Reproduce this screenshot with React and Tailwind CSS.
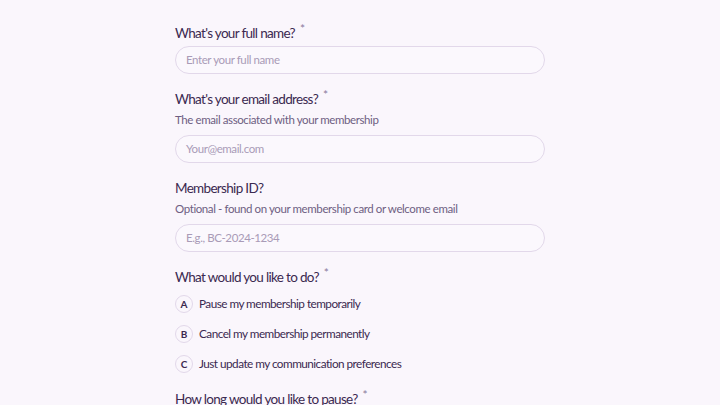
import React from "react";

function Label({ children, required }) {
  return (
    <div className="flex items-start text-[13.5px] leading-[20px] tracking-[-0.05em] text-[#3b2950]">
      <span>{children}</span>
      {required && <span className="ml-[5px] -mt-[4px] text-[12px] text-[#8a7a9c]">*</span>}
    </div>
  );
}

function Desc({ children }) {
  return <div className="mt-[2px] text-[11.5px] leading-[18px] tracking-[-0.035em] text-[#6e5e82]">{children}</div>;
}

function Input({ placeholder, className = "" }) {
  return (
    <div className={"h-[28px] w-full rounded-full border border-[#e2d8ea] bg-[#fbf8fd] px-[10px] flex items-center text-[11.5px] tracking-[-0.035em] text-[#a99bb7] " + className}>
      {placeholder}
    </div>
  );
}

function Option({ letter, children }) {
  return (
    <div className="flex h-[30px] items-center">
      <div className="flex h-[18px] w-[18px] items-center justify-center rounded-full border border-[#e2d8ea] text-[10px] font-bold text-[#3b2950]">
        {letter}
      </div>
      <span className="ml-[6px] text-[11.75px] tracking-[-0.045em] text-[#3b2950]">{children}</span>
    </div>
  );
}

export default function App() {
  return (
    <div className="h-[405px] w-[720px] overflow-hidden bg-[#faf6fc]" style={{ fontFamily: "Lato, 'Noto Sans', sans-serif" }}>
      <div className="mx-auto w-[370px] pt-[23px]">
        <Label required>What's your full name?</Label>
        <Input className="mt-[3px]" placeholder="Enter your full name" />

        <div className="mt-[15px]">
          <Label required>What's your email address?</Label>
          <Desc>The email associated with your membership</Desc>
          <Input className="mt-[6px]" placeholder="Your@email.com" />
        </div>

        <div className="mt-[15px]">
          <Label>Membership ID?</Label>
          <Desc>Optional - found on your membership card or welcome email</Desc>
          <Input className="mt-[6px]" placeholder="E.g., BC-2024-1234" />
        </div>

        <div className="mt-[15px]">
          <Label required>What would you like to do?</Label>
          <div className="mt-[2px]">
            <Option letter="A">Pause my membership temporarily</Option>
            <Option letter="B">Cancel my membership permanently</Option>
            <Option letter="C">Just update my communication preferences</Option>
          </div>
        </div>

        <div className="mt-[10px]">
          <Label required>How long would you like to pause?</Label>
        </div>
      </div>
    </div>
  );
}
